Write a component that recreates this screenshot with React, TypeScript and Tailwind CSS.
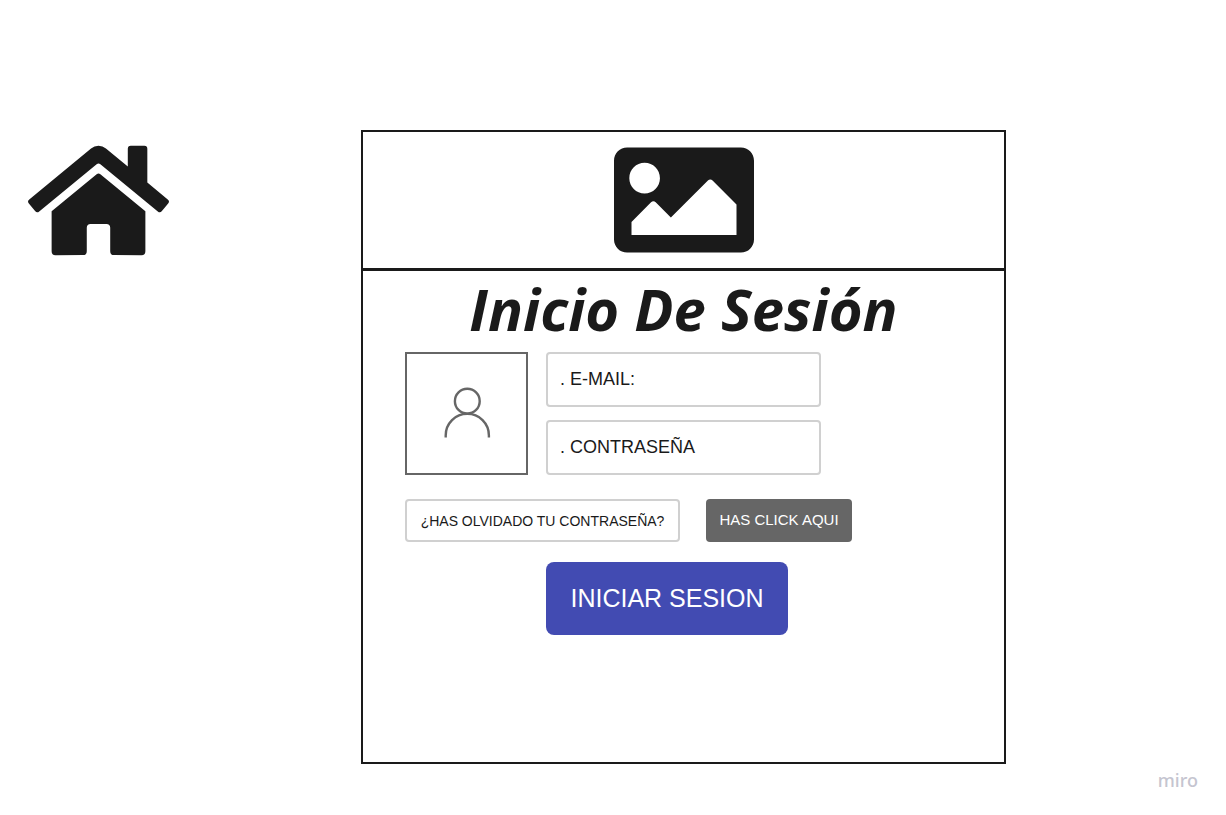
import type { ComponentPropsWithoutRef } from "react";
import { FaHome, FaImage } from "react-icons/fa";

function UserIcon() {
  return (
    <svg
      viewBox="0 0 48 52"
      className="h-[52px] w-12 overflow-visible"
      fill="none"
      stroke="currentColor"
      strokeWidth="2.4"
      aria-hidden="true"
    >
      <circle cx="24.3" cy="13.2" r="12.4" />
      <path d="M2.7 49.6v-2.2a21.6 21.6 0 0 1 43.2 0v2.2" />
    </svg>
  );
}

function Field(props: ComponentPropsWithoutRef<"input">) {
  return (
    <input
      {...props}
      className="h-[55px] w-full rounded border-2 border-[#d0d0d0] bg-white px-3 text-lg text-[#1a1a1a] placeholder:text-[#1a1a1a] placeholder:opacity-100"
    />
  );
}

function LoginForm() {
  return (
    <form
      className="flex flex-col px-[42px] pb-[127px]"
      onSubmit={(event) => event.preventDefault()}
    >
      <div className="flex gap-[18px]">
        <div className="flex size-[123px] shrink-0 items-center justify-center border-2 border-[#666] text-[#666]">
          <UserIcon />
        </div>
        <div className="flex w-full max-w-[275px] flex-col justify-between">
          <Field type="email" placeholder=". E-MAIL:" aria-label="E-MAIL" />
          <Field type="password" placeholder=". CONTRASEÑA" aria-label="CONTRASEÑA" />
        </div>
      </div>
      <div className="mt-6 flex gap-[26px]">
        <p className="flex h-[43px] w-[275px] items-center justify-center rounded-sm border-2 border-[#d0d0d0] text-sm whitespace-nowrap text-[#1a1a1a]">
          ¿HAS OLVIDADO TU CONTRASEÑA?
        </p>
        <button
          type="button"
          className="h-[43px] w-[146px] rounded-sm bg-[#666] text-[15px] whitespace-nowrap text-white"
        >
          HAS CLICK AQUI
        </button>
      </div>
      <button
        type="submit"
        className="mt-5 ml-[141px] h-[73px] w-[242px] rounded-lg bg-[#424bb2] text-[25px] whitespace-nowrap text-white"
      >
        INICIAR SESION
      </button>
    </form>
  );
}

export default function App() {
  return (
    <div className="flex min-h-screen flex-col bg-white pt-[130px] font-['Liberation_Sans',Arial,sans-serif] text-[#1a1a1a]">
      <main className="flex">
        <nav className="w-[361px] shrink-0 px-7 pt-2">
          <a href="#" aria-label="Inicio" className="inline-block">
            <FaHome className="h-[125px] w-[141px]" />
          </a>
        </nav>
        <section className="w-full max-w-[645px] border-2 border-[#1a1a1a]">
          <header className="flex h-[139px] items-center justify-center border-b-[3px] border-[#1a1a1a]">
            <FaImage className="size-[140px]" />
          </header>
          <h1 className="h-[81px] text-center font-['Open_Sans','Noto_Sans',sans-serif] text-[58px] leading-[76px] font-bold italic">
            Inicio De Sesión
          </h1>
          <LoginForm />
        </section>
      </main>
      <footer className="mt-auto flex justify-end px-7 pb-[21px]">
        <span className="font-['Noto_Sans',sans-serif] text-lg font-medium text-[#c5c5d0]">miro</span>
      </footer>
    </div>
  );
}
